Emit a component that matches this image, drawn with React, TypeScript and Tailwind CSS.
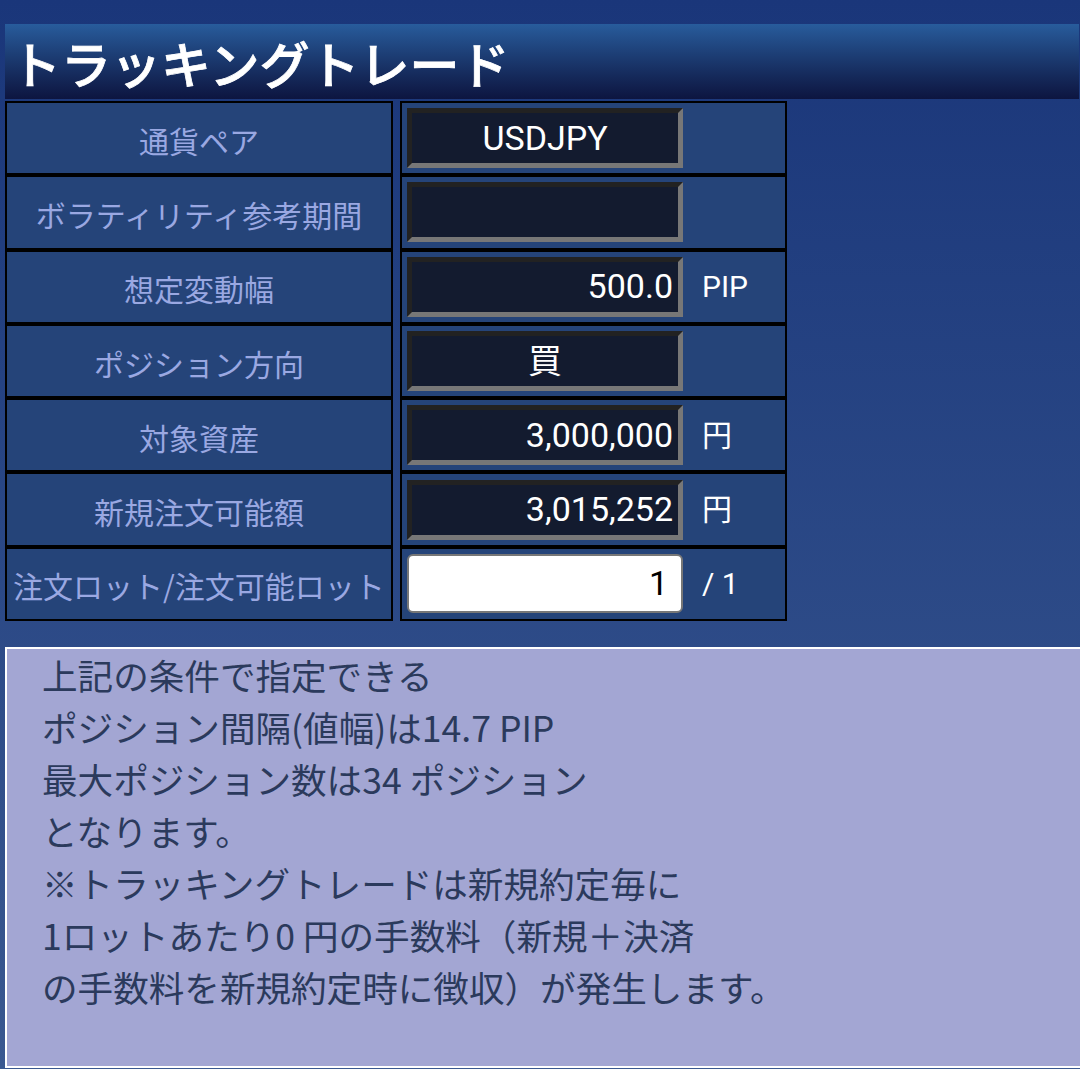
import React from "react";

interface Row {
  label: string;
  value: string;
  align: "center" | "right";
  suffix?: string;
  editable?: boolean;
}

const rows: Row[] = [
  { label: "通貨ペア", value: "USDJPY", align: "center" },
  { label: "ボラティリティ参考期間", value: "", align: "center" },
  { label: "想定変動幅", value: "500.0", align: "right", suffix: "PIP" },
  { label: "ポジション方向", value: "買", align: "center" },
  { label: "対象資産", value: "3,000,000", align: "right", suffix: "円" },
  { label: "新規注文可能額", value: "3,015,252", align: "right", suffix: "円" },
  { label: "注文ロット/注文可能ロット", value: "1", align: "right", suffix: "/ 1", editable: true },
];

const infoLines = [
  "上記の条件で指定できる",
  "ポジション間隔(値幅)は14.7 PIP",
  "最大ポジション数は34 ポジション",
  "となります。",
  "※トラッキングトレードは新規約定毎に",
  "1ロットあたり0 円の手数料（新規＋決済",
  "の手数料を新規約定時に徴収）が発生します。",
];

const cjk = "font-['Noto_Sans_CJK_JP',sans-serif]";
const num = "font-['Roboto','Noto_Sans_CJK_JP',sans-serif]";

export default function App() {
  return (
    <div className={`w-[1080px] h-[1069px] overflow-hidden bg-gradient-to-b from-[#1a367a] to-[#3a5890] pt-[24px] pl-[5px] ${cjk}`}>
      <div className="w-[1074px] h-[75px] bg-gradient-to-b from-[#285c9c] to-[#0d1540] flex items-center pl-[6px]">
        <h1 className="text-[50px] font-medium text-white leading-none [-webkit-text-stroke:0.8px_white]">トラッキングトレード</h1>
      </div>

      <div className="mt-[2px] flex flex-col">
        {rows.map((r) => (
          <div key={r.label} className="flex gap-[7px] h-[74.3px]">
            <div className="w-[388px] h-full border-2 border-black bg-[#254479] flex items-center justify-center pt-[3px]">
              <span className="text-[30px] text-[#9aa8e2] leading-none whitespace-nowrap">{r.label}</span>
            </div>
            <div className="w-[387px] h-full border-2 border-black bg-[#254479] flex items-center pl-[5px]">
              {r.editable ? (
                <div className={`w-[276px] h-[59px] bg-white border-2 border-[#777] rounded-[6px] flex items-center justify-end pr-[13px] text-[34px] text-black ${num}`}>
                  {r.value}
                </div>
              ) : (
                <div
                  className={`w-[276px] h-[60px] bg-[#131b2f] border-[5px] border-t-[#222] border-l-[#222] border-b-[#777] border-r-[#777] flex items-center text-[34px] text-white ${num} ${
                    r.align === "center" ? "justify-center" : "justify-end pr-[5px]"
                  }`}
                >
                  {r.value}
                </div>
              )}
              {r.suffix && (
                <span className={`ml-[19px] text-[30px] text-white ${num}`}>{r.suffix}</span>
              )}
            </div>
          </div>
        ))}
      </div>

      <div className="mt-[26px] w-[1077px] h-[421px] border-2 border-white bg-[#a3a6d3] pl-[35px]">
        {infoLines.map((l) => (
          <p key={l} className="text-[35.6px] leading-[52px] text-[#2b3a5c] whitespace-nowrap">
            {l}
          </p>
        ))}
      </div>
    </div>
  );
}
